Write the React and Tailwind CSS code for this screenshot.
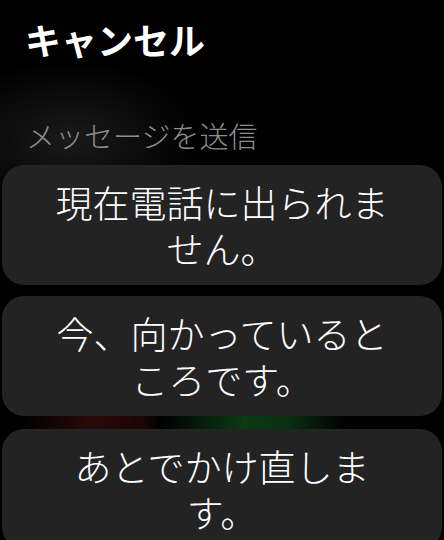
const replies = [
  "現在電話に出られません。",
  "今、向かっているところです。",
  "あとでかけ直します。",
];

const ReplyCard = ({ text }) => (
  <button className="w-full h-[120px] rounded-[22px] bg-[#232323] px-[46px] text-white text-[37px] leading-[46px] font-light text-center shrink-0">
    {text}
  </button>
);

export default function App() {
  return (
    <div
      className="w-[444px] h-[540px] overflow-hidden bg-black relative"
      style={{ fontFamily: '"Noto Sans CJK JP", "Noto Sans", sans-serif' }}
    >
      <div className="absolute left-[-60px] top-[60px] w-[260px] h-[160px] rounded-full bg-[radial-gradient(closest-side,#1a1a1a,transparent)]" />
      <div className="relative flex flex-col">
        <div className="pt-[17px] pl-[25px] h-[66px] text-white text-[36px] leading-[44px] font-bold">
          キャンセル
        </div>
        <div className="pt-[52px] pl-[26px] text-[#8d8d8d] text-[29px] leading-[34px] font-light">
          メッセージを送信
        </div>
        <div className="mt-[13px] px-[2px] flex flex-col">
          <ReplyCard text={replies[0]} />
          <div className="h-[11px]" />
          <ReplyCard text={replies[1]} />
          <div className="h-[13px] bg-[linear-gradient(90deg,transparent_5%,#2a0a08_20%,#1a0605_32%,#000_36%,#0b3a14_55%,#0a3012_65%,transparent_78%)]" />
          <ReplyCard text={replies[2]} />
        </div>
      </div>
    </div>
  );
}
